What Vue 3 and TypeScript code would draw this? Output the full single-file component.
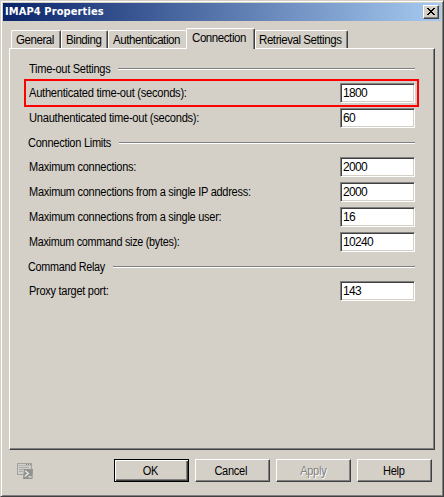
<script setup lang="ts">
import { ref } from 'vue'

interface Field { label: string; value: string; highlighted?: boolean; cls: string }
interface Section { title: string; cls: string; fields: Field[] }

const tabs = ['General', 'Binding', 'Authentication', 'Connection', 'Retrieval Settings']
const active = ref('Connection')
const sections = ref<Section[]>([
  {
    title: 'Time-out Settings', cls: 'timeouts',
    fields: [
      { label: 'Authenticated time-out (seconds):', value: '1800', highlighted: true, cls: 'auth' },
      { label: 'Unauthenticated time-out (seconds):', value: '60', cls: 'unauth' },
    ],
  },
  {
    title: 'Connection Limits', cls: 'limits',
    fields: [
      { label: 'Maximum connections:', value: '2000', cls: 'max' },
      { label: 'Maximum connections from a single IP address:', value: '2000', cls: 'ip' },
      { label: 'Maximum connections from a single user:', value: '16', cls: 'user' },
      { label: 'Maximum command size (bytes):', value: '10240', cls: 'size' },
    ],
  },
  {
    title: 'Command Relay', cls: 'relay',
    fields: [{ label: 'Proxy target port:', value: '143', cls: 'proxy' }],
  },
])
</script>

<template>
  <div class="window">
    <header class="titlebar">
      <span class="title">IMAP4 Properties</span>
      <button class="close" aria-label="Close">
        <svg width="8" height="7" viewBox="0 0 8 7" shape-rendering="crispEdges">
          <path d="M0 0h2v1h1v1h2V1h1V0h2v1H7v1H6v1H5v1h1v1h1v1h1v1H6V6H5V5H3v1H2v1H0V6h1V5h1V4h1V3H2V2H1V1H0z" fill="#000" />
        </svg>
      </button>
    </header>

    <nav class="tabs">
      <button
        v-for="(tab, i) in tabs" :key="tab"
        class="tab" :class="[`tab-${i}`, { active: active === tab }]"
        @click="active = tab"
      ><span>{{ tab }}</span></button>
    </nav>

    <main class="pane">
      <section v-for="s in sections" :key="s.title" :class="s.cls">
        <h2 class="heading"><span>{{ s.title }}</span></h2>
        <label v-for="f in s.fields" :key="f.label" class="row" :class="[f.cls, { highlighted: f.highlighted }]">
          <span class="label">{{ f.label }}</span>
          <input v-model="f.value" class="input" type="text" />
        </label>
      </section>
    </main>

    <footer class="footer">
      <svg class="shell" width="16" height="16" viewBox="0 0 16 16">
        <rect x=".5" y=".5" width="14" height="11" fill="#d0cfca" stroke="#a3a29f" />
        <path d="M1 2.5h13" stroke="#b9b8b5" />
        <path d="M9 1.5h1M11 1.5h1M13 1.5h1" stroke="#858585" />
        <path d="M2 4.5h10M2 6.5h5M2 8.5h4" stroke="#aaa" />
        <path d="M7 6h9l-.5 10H6z" fill="#929290" />
        <path d="M8.2 7.8l3.2 2.8-3.7 3M11.5 13.8h3" fill="none" stroke="#e9e9e7" stroke-width="1.3" />
      </svg>
      <button class="btn default"><span>OK</span></button>
      <button class="btn cancel"><span>Cancel</span></button>
      <button class="btn disabled" disabled><span>Apply</span></button>
      <button class="btn"><span>Help</span></button>
    </footer>
  </div>
</template>

<style>
body { margin: 0; overflow: hidden; }
</style>

<style scoped>
* { box-sizing: border-box; }
button { font: inherit; letter-spacing: inherit; color: inherit; padding: 0; margin: 0; border-radius: 0; }
.window {
  width: 444px; height: 497px; background: #d4d0c8; color: #000;
  font: 12px/14px "Liberation Sans", Arial, sans-serif; letter-spacing: -0.3px;
  border: 1px solid; border-color: #d4d0c8 #404040 #404040 #d4d0c8;
  box-shadow: inset 1px 1px #fff, inset -1px -1px #808080;
  padding: 2px; display: flex; flex-direction: column;
}
.titlebar {
  height: 18px; flex: none; display: flex; align-items: center; justify-content: space-between;
  padding: 0 2px; background: linear-gradient(90deg, #0a246a, #a6caf0);
}
.title { color: #fff; font: bold 11px/18px "DejaVu Sans Condensed", "DejaVu Sans", sans-serif; letter-spacing: 0.1px; white-space: nowrap; }
.close {
  width: 16px; height: 14px; background: #d4d0c8; border: 1px solid;
  border-color: #fff #404040 #404040 #fff; box-shadow: inset -1px -1px #808080;
  display: flex; justify-content: center; padding-top: 2px;
}
.tabs { height: 27px; flex: none; display: flex; align-items: flex-end; padding-left: 8px; }
.tab {
  height: 18px; border: 1px solid; border-color: #fff #404040 transparent #fff; border-bottom: 0;
  border-radius: 2px 2px 0 0; background: #d4d0c8; box-shadow: inset -1px 0 #808080;
  white-space: nowrap; display: flex; align-items: center; padding-left: 4px;
}
.tab span { transform: scaleX(0.96); transform-origin: 0 50%; letter-spacing: -0.45px; }
.tab-0 { width: 50px; }
.tab-1 { width: 47px; }
.tab-2 { width: 78px; border-right: 0; box-shadow: none; }
.tab-3 { width: 69px; }
.tab-4 { width: 93px; padding-left: 3px; }
.tab.active { height: 21px; margin-bottom: -1px; padding: 0 0 2px 5px; position: relative; z-index: 1; }
.pane {
  height: 402px; flex: none; margin: 0 6px; border: 1px solid;
  border-color: #fff #404040 #404040 #fff; box-shadow: inset -1px -1px #808080;
  padding: 8px 19px 0 14px;
}
.heading {
  margin: 0; padding-left: 4px; height: 24px; font: inherit; display: flex; align-items: center;
  white-space: nowrap;
}
.heading span { flex: none; width: 90px; transform: scaleX(0.92); transform-origin: 0 50%; }
.timeouts .heading { padding-left: 5px; }
.timeouts .heading span { width: 89px; }
.limits .heading span { width: 91px; }
.relay .heading span { width: 85px; transform: scaleX(0.9); }
.heading::after { content: ""; flex: 1; height: 2px; background: linear-gradient(#808080 50%, #fff 50%); }
.row {
  height: 25px; display: flex; align-items: flex-start; justify-content: space-between; padding: 2px 0 0 5px;
}
.row.highlighted { height: 28px; margin: -2px -4px -1px 0; border: 2px solid #f00; padding: 2px 2px 0 3px; }
.label { white-space: nowrap; line-height: 20px; transform: scaleX(0.917); transform-origin: 0 50%; }
.auth .label, .unauth .label { transform: scaleX(0.93); }
.size .label { transform: scaleX(0.9); }
.input {
  width: 75px; height: 20px; flex: none; border: 1px solid; border-color: #808080 #fff #fff #808080;
  box-shadow: inset 1px 1px #404040, inset -1px -1px #d4d0c8; background: #fff; border-radius: 0;
  padding: 0 2px; margin: 0; font: inherit; letter-spacing: -0.65px; outline: 0;
}
.footer { flex: none; display: flex; gap: 6px; padding: 9px 8px 0 14px; }
.shell { margin: 4px 75px 0 0; flex: none; }
.btn {
  width: 75px; height: 23px; background: #d4d0c8; border: 1px solid;
  border-color: #fff #404040 #404040 #fff; box-shadow: inset -1px -1px #808080;
  padding-right: 2px;
}
.btn span { display: inline-block; transform: scaleX(0.92); }
.btn.cancel { padding-right: 4px; }
.btn.default { border-color: #000; box-shadow: inset 1px 1px #fff, inset -1px -1px #404040, inset -2px -2px #808080; }
.btn.disabled { color: #808080; text-shadow: 1px 1px #fff; padding-right: 0; }
</style>
